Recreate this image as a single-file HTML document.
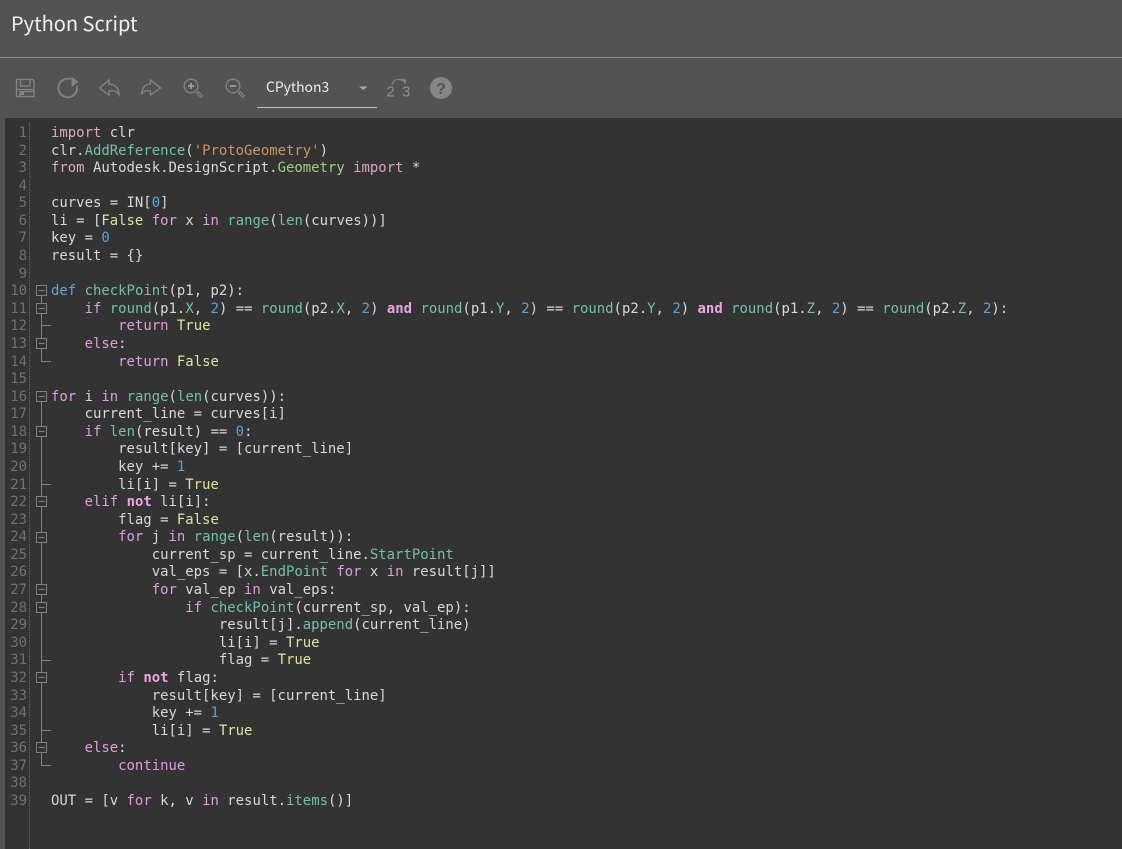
<!DOCTYPE html>
<html><head><meta charset="utf-8"><title>Python Script</title>
<style>
html,body{margin:0;padding:0;width:1122px;height:849px;overflow:hidden;background:#535353}
#title{position:absolute;left:11px;top:8px;font:20px/30px "Noto Sans CJK JP","Liberation Sans",sans-serif;color:#f0f0f0}
#sep{position:absolute;left:0;top:57px;width:1122px;height:1px;background:#8e8e8e}
#ed{position:absolute;left:5px;top:118px;width:1117px;height:731px;background:#333}
#dot{position:absolute;left:29px;top:123px;height:726px;border-left:1px dotted #666}
pre{position:absolute;margin:0;font:13.95px/17.58px "DejaVu Sans Mono",monospace;top:125px}
#nums{left:0;width:27px;text-align:right;color:#717171}
#code{left:51px;color:#d8d8d8}
.k{color:#dc9fdc}.i{color:#dba6c4}.f{color:#75bfae}.c{color:#e2e29e}.n{color:#58a6d8}.s{color:#cc9468}.d{color:#5ca6d8}.g{color:#a6cc84}
b{color:#f0a4e8}
#dd{position:absolute;left:266px;top:77px;font:13.900px/20px "Noto Sans CJK JP","Liberation Sans",sans-serif;color:#eee}
#ul{position:absolute;left:257px;top:107px;width:120px;height:1px;background:#bdbdbd}
svg{position:absolute;left:0;top:0}
</style></head><body>
<div id="title">Python Script</div>
<div id="sep"></div>
<div id="dd">CPython3</div>
<div id="ul"></div>
<div id="ed"></div>
<div id="dot"></div>
<svg width="1122" height="849" viewBox="0 0 1122 849" fill="none">
<g stroke="#858585" stroke-width="1.300">
<path d="M16.500 79.500h16l1.500 1.500v15.500h-17.500z"/>
<path d="M20.500 79.500v6.500h9.500v-6.500M16.500 89.500h17.500M20 96.500v-5h14"/>
<rect x="21" y="92" width="3" height="3" fill="#858585" stroke="none"/>
<path d="M71 79.300a9.300 9.300 0 1 0 5.800 6.700" stroke-width="1.800"/>
<path d="M71.500 76.500l7 5.500-7 5z" fill="#858585" stroke="none"/>
<path d="M109 80l-9.500 8 9.500 7v-4c4-1 8 0 10 4 .5-6-4-11-10-11z"/>
<path d="M150.500 80l10 8-10 7v-4c-4-1-7 0-9 3.500.5-6 3-10.500 9-10.500z"/>
<circle cx="191" cy="86" r="6.800" stroke-width="1.400"/>
<circle cx="233" cy="86" r="6.800" stroke-width="1.400"/>
<path d="M197 92l5 5M239 92l5 5" stroke-width="3.200"/>
<path d="M198 93l3.500 3.500M240 93l3.500 3.500" stroke="#535353" stroke-width="1"/>
<path d="M188 86h6M191 83v6M230 86h6" stroke="#a0a0a0" stroke-width="1.800"/>
<path d="M392 84.500c1-4 6-7 12-3.500" stroke-width="1.300"/>
<path d="M401.500 79l5 .5-1 5z" fill="#858585" stroke="none"/>
</g>
<path d="M359 86.500h8.500l-4.250 3.500z" fill="#a8a8a8"/>
<text x="386.500" y="96.500" font-family="Liberation Sans,sans-serif" font-size="15" fill="#909090">2</text>
<text x="402" y="96.500" font-family="Liberation Sans,sans-serif" font-size="15" fill="#909090">3</text>
<circle cx="441" cy="88" r="11" fill="#868686"/>
<text x="441" y="94" text-anchor="middle" font-family="Liberation Sans,sans-serif" font-size="16" font-weight="700" fill="#535353">?</text>
<g stroke="#808080" stroke-width="1">
<path d="M41.500 290v71.500H51M41.500 325.500H51M41.500 396v369.500H51M41.500 484.500H51M41.500 660.500H51M41.500 730.500H51"/>
<g fill="#333">
<rect x="36.500" y="285.500" width="10" height="10"/>
<rect x="36.500" y="303.500" width="10" height="10"/>
<rect x="36.500" y="338.500" width="10" height="10"/>
<rect x="36.500" y="391.500" width="10" height="10"/>
<rect x="36.500" y="426.500" width="10" height="10"/>
<rect x="36.500" y="496.500" width="10" height="10"/>
<rect x="36.500" y="532.500" width="10" height="10"/>
<rect x="36.500" y="584.500" width="10" height="10"/>
<rect x="36.500" y="602.500" width="10" height="10"/>
<rect x="36.500" y="672.500" width="10" height="10"/>
<rect x="36.500" y="742.500" width="10" height="10"/>
</g>
<path d="M38.500 290.500h6M38.500 308.500h6M38.500 343.500h6M38.500 396.500h6M38.500 431.500h6M38.500 501.500h6M38.500 537.500h6M38.500 589.500h6M38.500 607.500h6M38.500 677.500h6M38.500 747.500h6"/>
</g>
</svg>
<pre id="nums">1
2
3
4
5
6
7
8
9
10
11
12
13
14
15
16
17
18
19
20
21
22
23
24
25
26
27
28
29
30
31
32
33
34
35
36
37
38
39</pre>
<pre id="code"><span class="i">import</span> clr
clr.<span class="f">AddReference</span>(<span class="s">'ProtoGeometry'</span>)
<span class="i">from</span> Autodesk.DesignScript.<span class="g">Geometry</span> <span class="i">import</span> *

curves = IN[<span class="n">0</span>]
li = [<span class="c">False</span> <span class="k">for</span> x <span class="k">in</span> <span class="f">range</span>(<span class="f">len</span>(curves))]
key = <span class="n">0</span>
result = {}

<span class="d">def</span> <span class="f">checkPoint</span>(p1, p2):
    <span class="k">if</span> <span class="f">round</span>(p1.<span class="f">X</span>, <span class="n">2</span>) == <span class="f">round</span>(p2.<span class="f">X</span>, <span class="n">2</span>) <b>and</b> <span class="f">round</span>(p1.<span class="f">Y</span>, <span class="n">2</span>) == <span class="f">round</span>(p2.<span class="f">Y</span>, <span class="n">2</span>) <b>and</b> <span class="f">round</span>(p1.<span class="f">Z</span>, <span class="n">2</span>) == <span class="f">round</span>(p2.<span class="f">Z</span>, <span class="n">2</span>):
        <span class="k">return</span> <span class="c">True</span>
    <span class="k">else</span>:
        <span class="k">return</span> <span class="c">False</span>

<span class="k">for</span> i <span class="k">in</span> <span class="f">range</span>(<span class="f">len</span>(curves)):
    current_line = curves[i]
    <span class="k">if</span> <span class="f">len</span>(result) == <span class="n">0</span>:
        result[key] = [current_line]
        key += <span class="n">1</span>
        li[i] = <span class="c">True</span>
    <span class="k">elif</span> <b>not</b> li[i]:
        flag = <span class="c">False</span>
        <span class="k">for</span> j <span class="k">in</span> <span class="f">range</span>(<span class="f">len</span>(result)):
            current_sp = current_line.<span class="f">StartPoint</span>
            val_eps = [x.<span class="f">EndPoint</span> <span class="k">for</span> x <span class="k">in</span> result[j]]
            <span class="k">for</span> val_ep <span class="k">in</span> val_eps:
                <span class="k">if</span> <span class="f">checkPoint</span>(current_sp, val_ep):
                    result[j].<span class="f">append</span>(current_line)
                    li[i] = <span class="c">True</span>
                    flag = <span class="c">True</span>
        <span class="k">if</span> <b>not</b> flag:
            result[key] = [current_line]
            key += <span class="n">1</span>
            li[i] = <span class="c">True</span>
    <span class="k">else</span>:
        <span class="k">continue</span>

OUT = [v <span class="k">for</span> k, v <span class="k">in</span> result.<span class="f">items</span>()]</pre>
</body></html>
